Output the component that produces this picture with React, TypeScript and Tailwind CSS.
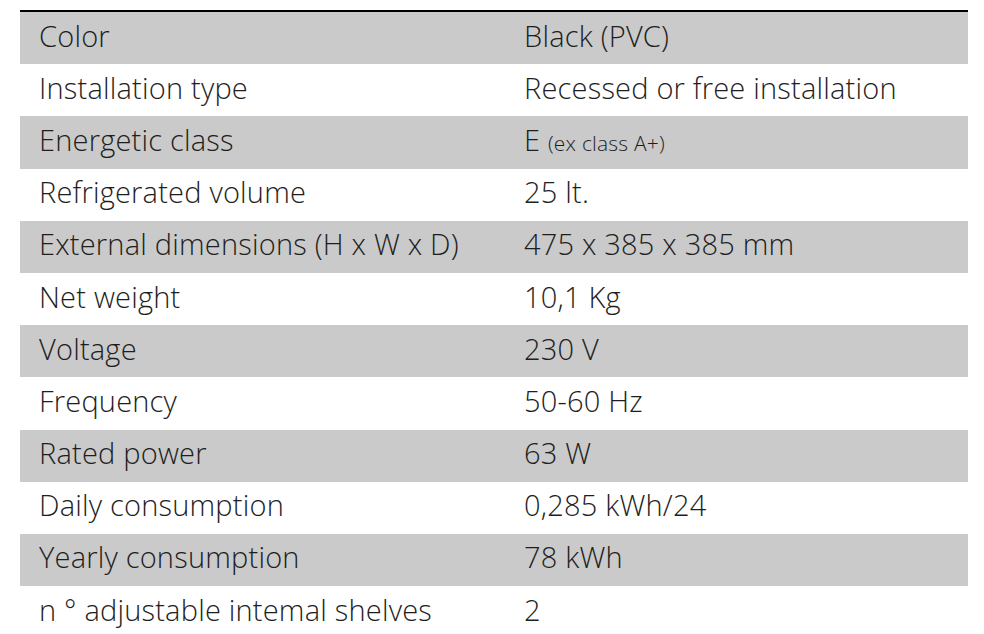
const specs: { label: string; value: React.ReactNode }[] = [
  { label: "Color", value: "Black (PVC)" },
  { label: "Installation type", value: "Recessed or free installation" },
  {
    label: "Energetic class",
    value: (
      <>
        E <span className="text-[21px]">(ex class A+)</span>
      </>
    ),
  },
  { label: "Refrigerated volume", value: "25 lt." },
  { label: "External dimensions (H x W x D)", value: "475 x 385 x 385 mm" },
  { label: "Net weight", value: "10,1 Kg" },
  { label: "Voltage", value: "230 V" },
  { label: "Frequency", value: "50-60 Hz" },
  { label: "Rated power", value: "63 W" },
  { label: "Daily consumption", value: "0,285 kWh/24" },
  { label: "Yearly consumption", value: "78 kWh" },
  { label: "n ° adjustable intemal shelves", value: "2" },
];

export default function App() {
  return (
    <div className="min-h-screen bg-white pt-[10px] font-['Open_Sans',sans-serif] font-[350] text-[#1e1e1e]">
      <div className="mx-[20px] w-[948px] border-t-2 border-black">
        {specs.map((row, i) => (
          <div
            key={row.label}
            className={`flex h-[52.2px] items-center pb-[6px] text-[29px] leading-none tracking-[0.2px] ${
              i % 2 === 0 ? "bg-[#cacaca]" : "bg-white"
            }`}
          >
            <div className="w-[504px] pl-[19px]">{row.label}</div>
            <div className="flex-1">{row.value}</div>
          </div>
        ))}
      </div>
    </div>
  );
}
